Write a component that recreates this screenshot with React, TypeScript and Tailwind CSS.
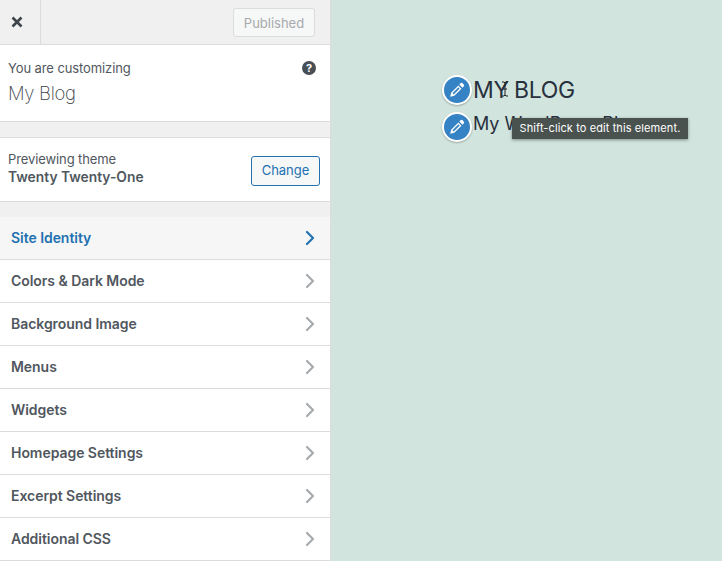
import { ChevronRight } from "lucide-react";

const sections = [
  "Site Identity",
  "Colors & Dark Mode",
  "Background Image",
  "Menus",
  "Widgets",
  "Homepage Settings",
  "Excerpt Settings",
  "Additional CSS",
];

function Pencil({ top }: { top: string }) {
  return (
    <span className={`absolute left-[-31px] ${top} flex h-[30px] w-[30px] items-center justify-center rounded-full border-2 border-white bg-[#3582c4] shadow-[0_1px_2px_rgba(0,0,0,0.25)]`}>
      <svg width="18" height="18" viewBox="0 0 20 20" fill="#fff">
        <path d="M13.9 2.6a1.6 1.6 0 0 1 2.3 0l1.2 1.2a1.6 1.6 0 0 1 0 2.3l-1.3 1.3-3.5-3.5zM11.5 5 15 8.5l-8 8-4.6 1.1L3.5 13zM5 13.6l1.4 1.4 6.6-6.6-1.4-1.4z" />
      </svg>
    </span>
  );
}

export default function App() {
  return (
    <div className="flex h-[561px] w-[722px] overflow-hidden font-['Inter',sans-serif] text-[#50575e]">
      <aside className="h-full w-[331px] shrink-0 border-r border-[#dcdcde] bg-[#f0f0f1]">
        <div className="flex h-[45px] items-center justify-between border-b border-[#dcdcde] bg-[#f0f0f0] pr-[15px]">
          <div className="flex h-full w-[41px] items-center justify-center border-r border-[#dcdcde] pr-[6px]">
            <svg width="12" height="12" viewBox="0 0 12 12" stroke="#3c434a" strokeWidth="2.6">
              <path d="M1.5 1.5l9 9M10.5 1.5l-9 9" />
            </svg>
          </div>
          <button className="h-[29px] w-[82px] rounded-[3px] border border-[#dcdcde] bg-[#f6f7f7] pt-[3px] text-[13px] text-[#a7aaad]">
            Published
          </button>
        </div>

        <div className="flex h-[77px] justify-between border-b border-[#dcdcde] bg-white pl-2 pr-[14px] pt-[14px]">
          <div>
            <p className="text-[13px] leading-[18px] tracking-[-0.1px] text-[#50575e]">You are customizing</p>
            <p className="mt-[3px] text-[18.5px] font-extralight leading-[26px] tracking-[-0.3px] text-[#3c434a]">My Blog</p>
          </div>
          <span className="mt-[2px] flex h-[14px] w-[14px] items-center justify-center rounded-full bg-[#484e55] text-[11px] font-bold text-white">?</span>
        </div>

        <div className="mt-[15px] flex h-[65px] items-center justify-between border-y border-[#dcdcde] bg-white pl-2 pr-[10px]">
          <div className="pb-[4px]">
            <p className="text-[13px] leading-[18px] tracking-[-0.1px]">Previewing theme</p>
            <p className="text-[13.8px] font-semibold leading-[18px] text-[#50575e]">Twenty Twenty-One</p>
          </div>
          <button className="mt-[2px] h-[30px] w-[69px] rounded-[3px] border border-[#2271b1] bg-[#f6f7f7] pt-[1px] text-[13px] text-[#2271b1]">
            Change
          </button>
        </div>

        <div className="mt-[15px]">
          {sections.map((name, i) => (
            <div
              key={name}
              className={`flex h-[43px] items-center justify-between border-b border-[#dcdcde] pl-[11px] pr-[8px] text-[14px] font-semibold tracking-[-0.05px] ${
                i === 0 ? "bg-[#f6f6f6] text-[#2271b1]" : "bg-white text-[#50575e]"
              }`}
            >
              <span className="pb-[2px]">{name}</span>
              <ChevronRight size={24} strokeWidth={2.2} className={i === 0 ? "text-[#2271b1]" : "text-[#a7aaad]"} />
            </div>
          ))}
        </div>
      </aside>

      <main className="relative flex-1 bg-[#d1e4dd] pl-[142px] pt-[75px] text-[#28303d]">
        <div className="relative">
          <Pencil top="top-0" />
          <h1 className="text-[23px] font-normal leading-[30px] tracking-[-0.3px] [word-spacing:-1px]">MY BLOG</h1>
          <Pencil top="top-[37px]" />
          <p className="mt-[5px] text-[18px] leading-[28px]">My WordPress Blog</p>
        </div>
        {/* text cursor */}
        <svg className="absolute left-[170px] top-[81px]" width="8" height="16" viewBox="0 0 8 16" fill="none" stroke="#222" strokeWidth="1">
          <path d="M1 1h2l1 1 1-1h2M4 2v12M1 15h2l1-1 1 1h2M2 8h4" />
        </svg>
        <div className="absolute left-[181px] top-[118px] flex h-[21px] w-[176px] items-center justify-center bg-[#4a5250] text-[11px] tracking-[0.1px] text-white shadow-[0_1px_3px_rgba(0,0,0,0.4)]">
          Shift-click to edit this element.
        </div>
      </main>
    </div>
  );
}
